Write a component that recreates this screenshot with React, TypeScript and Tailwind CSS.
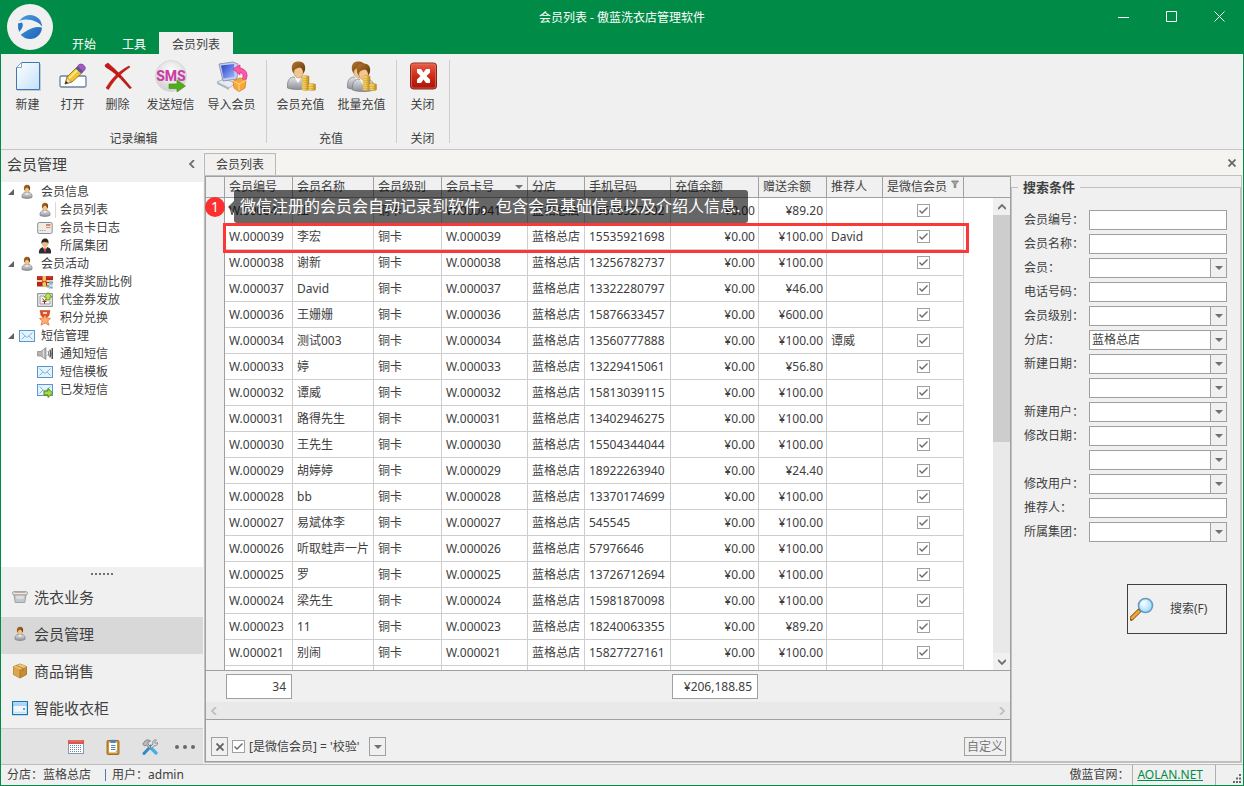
import { useState, type ReactNode } from 'react'
import clsx from 'clsx'

type Member = {
  no: string
  name: string
  phone: string
  gift: string
  referrer?: string
}

const members: Member[] = [
  { no: 'W.000041', name: '江', phone: '13676527302', gift: '¥89.20' },
  { no: 'W.000039', name: '李宏', phone: '15535921698', gift: '¥100.00', referrer: 'David' },
  { no: 'W.000038', name: '谢新', phone: '13256782737', gift: '¥100.00' },
  { no: 'W.000037', name: 'David', phone: '13322280797', gift: '¥46.00' },
  { no: 'W.000036', name: '王姗姗', phone: '15876633457', gift: '¥600.00' },
  { no: 'W.000034', name: '测试003', phone: '13560777888', gift: '¥100.00', referrer: '谭威' },
  { no: 'W.000033', name: '婷', phone: '13229415061', gift: '¥56.80' },
  { no: 'W.000032', name: '谭威', phone: '15813039115', gift: '¥100.00' },
  { no: 'W.000031', name: '路得先生', phone: '13402946275', gift: '¥100.00' },
  { no: 'W.000030', name: '王先生', phone: '15504344044', gift: '¥100.00' },
  { no: 'W.000029', name: '胡婷婷', phone: '18922263940', gift: '¥24.40' },
  { no: 'W.000028', name: 'bb', phone: '13370174699', gift: '¥100.00' },
  { no: 'W.000027', name: '易斌体李', phone: '545545', gift: '¥100.00' },
  { no: 'W.000026', name: '听取蛙声一片', phone: '57976646', gift: '¥100.00' },
  { no: 'W.000025', name: '罗', phone: '13726712694', gift: '¥100.00' },
  { no: 'W.000024', name: '梁先生', phone: '15981870098', gift: '¥100.00' },
  { no: 'W.000023', name: '11', phone: '18240063355', gift: '¥89.20' },
  { no: 'W.000021', name: '别闹', phone: '15827727161', gift: '¥100.00' },
]

const searchFields = [
  { id: 'no', label: '会员编号：', kind: 'text' },
  { id: 'name', label: '会员名称：', kind: 'text' },
  { id: 'member', label: '会员：', kind: 'select' },
  { id: 'phone', label: '电话号码：', kind: 'text' },
  { id: 'level', label: '会员级别：', kind: 'select' },
  { id: 'shop', label: '分店：', kind: 'select', value: '蓝格总店' },
  { id: 'created-from', label: '新建日期：', kind: 'select' },
  { id: 'created-to', label: '', kind: 'select' },
  { id: 'created-by', label: '新建用户：', kind: 'select' },
  { id: 'modified-from', label: '修改日期：', kind: 'select' },
  { id: 'modified-to', label: '', kind: 'select' },
  { id: 'modified-by', label: '修改用户：', kind: 'select' },
  { id: 'referrer', label: '推荐人：', kind: 'text' },
  { id: 'group', label: '所属集团：', kind: 'select' },
]

/* ---------- icons ---------- */

function Gradients() {
  return (
    <svg className="absolute h-0 w-0" aria-hidden="true">
      <defs>
        <linearGradient id="g-paper" x1="0" y1="0" x2="1" y2="1">
          <stop offset="0" stopColor="#ffffff" />
          <stop offset="1" stopColor="#c4e0fa" />
        </linearGradient>
        <linearGradient id="g-logo" x1="0" y1="0" x2="1" y2="1">
          <stop offset="0" stopColor="#4a9fe0" />
          <stop offset="1" stopColor="#1d63b8" />
        </linearGradient>
        <linearGradient id="g-red" x1="0" y1="0" x2="0" y2="1">
          <stop offset="0" stopColor="#e8604a" />
          <stop offset="0.5" stopColor="#cc2c18" />
          <stop offset="1" stopColor="#a81405" />
        </linearGradient>
        <linearGradient id="g-hair" x1="0" y1="0" x2="1" y2="1">
          <stop offset="0" stopColor="#b87830" />
          <stop offset="1" stopColor="#5c3208" />
        </linearGradient>
        <linearGradient id="g-body" x1="0" y1="0" x2="0" y2="1">
          <stop offset="0" stopColor="#e2e4e8" />
          <stop offset="1" stopColor="#8c9096" />
        </linearGradient>
        <linearGradient id="g-gold" x1="0" y1="0" x2="1" y2="0">
          <stop offset="0" stopColor="#f8e08a" />
          <stop offset="0.5" stopColor="#f0c850" />
          <stop offset="1" stopColor="#b07c14" />
        </linearGradient>
        <linearGradient id="g-screen" x1="0" y1="0" x2="1" y2="1">
          <stop offset="0" stopColor="#2440c8" />
          <stop offset="1" stopColor="#a0b8fc" />
        </linearGradient>
        <radialGradient id="g-sms" cx="0.5" cy="0.35" r="0.65">
          <stop offset="0" stopColor="#ffffff" />
          <stop offset="1" stopColor="#cfcfcf" />
        </radialGradient>
        <radialGradient id="g-lens" cx="0.4" cy="0.4" r="0.6">
          <stop offset="0" stopColor="#f4fdff" />
          <stop offset="1" stopColor="#9cdcfa" />
        </radialGradient>
      </defs>
    </svg>
  )
}

function LogoIcon() {
  return (
    <svg viewBox="0 0 46 46" className="h-[46px] w-[46px]">
      <circle cx="23" cy="23" r="23" fill="#f0f0f0" />
      <circle cx="23" cy="23" r="12" fill="url(#g-logo)" />
      <path d="M10 19 C15 13 31 15 36 24 C28 21 22 25 12 32 L10 27 C13 25 13 22 10 19 Z" fill="#f0f0f0" />
      <path d="M11 19.500 L15 18.500 C17 21.500 15 25 12 28 Z" fill="#2a78c8" />
    </svg>
  )
}

function NewIcon() {
  return (
    <svg viewBox="0 0 32 32" className="h-8 w-8">
      <path d="M9.500 2.500 H27.500 V29.500 H4.500 V7.500 Z" fill="url(#g-paper)" stroke="#3f78b4" />
      <path d="M9.500 2.500 V7.500 H4.500 Z" fill="#fff" stroke="#7fa8d0" />
      <path d="M5 30.500 H28.500 V4" fill="none" stroke="#9db4cc" opacity=".6" />
    </svg>
  )
}

function OpenIcon() {
  return (
    <svg viewBox="0 0 32 32" className="h-8 w-8">
      <rect x="3" y="16" width="26" height="11" rx="1.500" fill="#fff" stroke="#6a80a0" strokeWidth="1.300" />
      <path d="M8 24 L10 17 L20 7 L26 12 L15 22 Z" fill="#f4c430" stroke="#8a6410" strokeWidth=".8" />
      <path d="M11.500 19 L22 8.500" stroke="#fff0a0" strokeWidth="1.600" />
      <path d="M8 24 L10 17.500 L14.500 22 Z" fill="#f5dcb4" stroke="#8a6410" strokeWidth=".6" />
      <path d="M8 24 L9 21 L11 23 Z" fill="#222" />
      <path d="M18.500 8.500 L20.500 6.500 L26 11.500 L24 13.500 Z" fill="#4a6090" />
      <path d="M20.500 6.500 C22 3.500 25 3.500 27 5.500 C29 7.500 28.500 10 26 11.500 Z" fill="#a858c8" stroke="#6c2c88" strokeWidth=".7" />
    </svg>
  )
}

function DeleteIcon() {
  return (
    <svg viewBox="0 0 32 32" className="h-8 w-8">
      <path d="M3 5 L6 3 C14 10 21 17 29.500 28 L27.500 28.500 C19 18.500 12 12 3.500 7 Z" fill="#c81810" stroke="#8c0c08" strokeWidth=".5" />
      <path d="M27 6 L28 7 C18 14 12 20 6.500 29.500 L4 28 C10 18 17 11 27 6 Z" fill="#d01c14" stroke="#8c0c08" strokeWidth=".5" />
    </svg>
  )
}

function SmsIcon() {
  return (
    <svg viewBox="0 0 32 32" className="h-8 w-8">
      <circle cx="16" cy="16" r="15.500" fill="url(#g-sms)" stroke="#d8d8d8" />
      <text x="16" y="21" textAnchor="middle" fontFamily="Roboto, sans-serif" fontSize="14" fontWeight="800" fill="#c840a4">SMS</text>
      <path d="M14 24 H22 V20 L30.500 26 L22 32 V28.500 H14 Z" fill="#52ac18" stroke="#3c8c0c" strokeWidth=".6" />
    </svg>
  )
}

function ImportIcon() {
  return (
    <svg viewBox="0 0 32 32" className="h-8 w-8">
      <path d="M1 22 L8 19 L20 23 L13 28 Z" fill="#e8ecf2" stroke="#98a0b0" strokeWidth=".7" />
      <path d="M1 22 V24 L13 30 V28 Z" fill="#b0b8c4" />
      <path d="M3 4 L17 2 L22 4 L21 19 L7 21 Z" fill="#c8d0e8" stroke="#7c88b0" strokeWidth=".8" />
      <path d="M5 5.500 L18 4 L18.500 17 L7.500 18.500 Z" fill="url(#g-screen)" />
      <path d="M17 9 L24 5 V8 C31 9 33 16 29 21 L26 19 C28 16 27 13 24 12.500 V15 Z" fill="#fc58a8" stroke="#d82480" strokeWidth=".7" />
      <path d="M17 21 L24 18 L30 20.500 L29 28 L23 31.500 L18 28 Z" fill="#f8a838" stroke="#c87414" strokeWidth=".7" />
      <path d="M17 21 L23 24 L30 20.500 M23 24 V31" stroke="#fcd890" fill="none" />
    </svg>
  )
}

function Coins() {
  return (
    <g stroke="#b88820" strokeWidth=".4">
      {[29, 27, 25, 23, 21, 19, 17].map((y) => (
        <ellipse key={y} cx="20.500" cy={y} rx="3.800" ry="1.600" fill="url(#g-gold)" />
      ))}
      {[29, 27, 25].map((y) => (
        <ellipse key={y} cx="27" cy={y} rx="3.800" ry="1.600" fill="url(#g-gold)" />
      ))}
    </g>
  )
}

function Bust({ x = 0, y = 0 }: { x?: number; y?: number }) {
  return (
    <g transform={`translate(${x} ${y})`}>
      <path d="M2.500 28 C2 19 5 17.500 9 17 L13 20 L17 17 C22 18 24 20 24 28 C18 30 8 30 2.500 28 Z" fill="url(#g-body)" stroke="#787c82" strokeWidth=".7" />
      <path d="M10 16 H16 V18 L13 23 L10 18 Z" fill="#fff" />
      <path d="M9 6 H18 V12 C18 16 15.500 18 13.500 18 C11 18 9 15 9 12 Z" fill="#f2c690" stroke="#b07c44" strokeWidth=".5" />
      <path d="M7 10 C6 4 9 1.500 13 1.500 C18 1.500 21 4 20 10 L18.500 14 C18 10 17 8 15 7.500 C12 8.500 9 8 8.500 14 Z" fill="url(#g-hair)" />
    </g>
  )
}

function RechargeIcon() {
  return (
    <svg viewBox="0 0 32 32" className="h-8 w-8">
      <Bust />
      <Coins />
    </svg>
  )
}

function BatchRechargeIcon() {
  return (
    <svg viewBox="0 0 32 32" className="h-8 w-8">
      <Bust x={-1} />
      <Bust x={4} y={2} />
      <Coins />
    </svg>
  )
}

function CloseBoxIcon() {
  return (
    <svg viewBox="0 0 32 32" className="h-8 w-8">
      <rect x="3.500" y="3" width="26" height="26" rx="3" fill="url(#g-red)" stroke="#84261c" />
      <rect x="4.500" y="4" width="24" height="24" rx="2" fill="none" stroke="#f0806c" strokeWidth=".8" opacity=".7" />
      <path d="M10 9 H14 L16.500 12.500 L19 9 H23 V12.500 L19.500 16 L23 19.500 V23 H19 L16.500 19.500 L14 23 H10 V19.500 L13.500 16 L10 12.500 Z" fill="#fff" />
    </svg>
  )
}

function PersonIcon() {
  return (
    <svg viewBox="0 0 16 16" className="h-4 w-4">
      <path d="M3 13.500 C2.500 10 4.500 9 6 8.500 H10 C12 9 13.500 10 13 13.500 C10 14.800 6 14.800 3 13.500 Z" fill="url(#g-body)" stroke="#7c8088" strokeWidth=".7" />
      <path d="M6.500 8.500 H9.500 L8 11.500 Z" fill="#fff" />
      <path d="M5.800 3 H10.200 V6 C10.200 8 9 9 8 9 C7 9 5.800 8 5.800 6 Z" fill="#f4c488" stroke="#b07c44" strokeWidth=".4" />
      <path d="M5 5.500 C4.500 2 6 .7 8 .7 C10.500 .7 11.500 2.500 11 5.500 L10.300 6.500 C10 4.500 9 4 8.500 3.500 C7.500 4.200 6 4 5.700 6.500 Z" fill="url(#g-hair)" />
    </svg>
  )
}

function CardIcon() {
  return (
    <svg viewBox="0 0 16 16" className="h-4 w-4">
      <rect x=".7" y="2.500" width="14.500" height="11" rx="1.500" fill="#f0ece4" stroke="#8c9096" />
      <path d="M9 5 H13.500" stroke="#f05a20" strokeWidth="1.500" />
      <path d="M9 7.500 H13.500" stroke="#88a8c8" />
      <path d="M2.500 10.500 H9" stroke="#a8a8b0" strokeDasharray="1.500 .8" />
    </svg>
  )
}

function GroupIcon() {
  return (
    <svg viewBox="0 0 16 16" className="h-4 w-4">
      <path d="M2 15.500 C1.500 11 4 10 6 9 H10 C13 10 14.500 11 14 15.500 Z" fill="#2c2c30" />
      <path d="M6 9 H10 L8 14 Z" fill="#fff" />
      <path d="M7.500 9.500 H8.500 L9 13 L8 14.500 L7 13 Z" fill="#d42820" />
      <circle cx="8" cy="6" r="3" fill="#eeb888" />
      <path d="M4.500 6 C4 2 6 .6 8.500 .6 C11 .6 12 3 11.300 6 L10.500 4.500 C8.500 4 7 3.500 5.500 4.500 Z" fill="#30241c" />
    </svg>
  )
}

function GiftIcon() {
  return (
    <svg viewBox="0 0 16 16" className="h-4 w-4">
      <path d="M0 2 H16 V12.500 H0 Z" fill="#b8241c" />
      <path d="M0 6 H16 V8 H0 Z" fill="#e8d0a0" />
      <path d="M5.500 2 H9 V12.500 H5.500 Z" fill="#f0cc60" />
      <path d="M1 3 H5 M10 3 H15" stroke="#dc5040" strokeWidth="1.200" />
      <path d="M5 6 L7.200 7.500 L9.500 6 V9 L7.200 8 L5 9 Z" fill="#e03c20" />
      <rect x="10" y="9" width="6" height="5" fill="#d8dce0" />
      <circle cx="14" cy="9" r="1.800" fill="#78b8e8" />
      <path d="M12 14.500 C12 12 16 12 16 14.500 Z" fill="#70a8e0" />
      <circle cx="11" cy="12" r="1.500" fill="#80b858" />
    </svg>
  )
}

function VoucherIcon() {
  return (
    <svg viewBox="0 0 16 16" className="h-4 w-4">
      <rect x=".7" y="1.700" width="14.600" height="12.600" fill="#f4f4f4" stroke="#7c8084" />
      <path d="M3 4 V12 M3 4 H7 M3 12 H13 M13 9 V12" stroke="#989ca0" fill="none" />
      <path d="M5.500 6.500 L7.500 9 L9.500 6.500 M7.500 9 V12 M5.500 9.500 H9.500" stroke="#a83028" fill="none" />
      <path d="M11 .5 L15 5 H13 V8 H9 V5 H7 Z" fill="#bce058" stroke="#5c8c14" strokeWidth=".8" />
    </svg>
  )
}

function MedalIcon() {
  return (
    <svg viewBox="0 0 16 16" className="h-4 w-4">
      <path d="M3 .5 H13 L12 5.500 L9.500 8 L8.500 5 H7.500 L6.500 8 L4 5.500 Z" fill="#dc5028" stroke="#b43c14" strokeWidth=".5" />
      <path d="M6 2 H10 V4 H6 Z" fill="#fcd8c0" />
      <path d="M8 5 L9.600 8 L13.500 8.500 L10.700 11 L12 15.200 L8 13 L4 15.200 L5.300 11 L2.500 8.500 L6.400 8 Z" fill="#fcb078" stroke="#e8702c" strokeWidth=".8" />
    </svg>
  )
}

function MailIcon({ sent = false }: { sent?: boolean }) {
  return (
    <svg viewBox="0 0 16 16" className="h-4 w-4">
      <rect x=".5" y="2.500" width="15" height="11" fill="#e4f4fe" stroke="#5c94cc" />
      <path d="M2.500 4.500 L8 9.500 L13.500 4.500 M2.500 11.500 L6 8 M13.500 11.500 L10 8" stroke="#78a8cc" fill="none" strokeWidth=".9" />
      {sent && <path d="M7 9 H11 V6.500 L15.800 11 L11 15.500 V13 H7 Z" fill="#a4dc3c" stroke="#4c7c14" strokeWidth=".9" />}
    </svg>
  )
}

function SpeakerIcon() {
  return (
    <svg viewBox="0 0 16 16" className="h-4 w-4">
      <path d="M.5 5.500 H4 L9 1.500 V13.500 L4 10 H.5 Z" fill="#b4b4b4" stroke="#848484" strokeWidth=".7" />
      <path d="M6.500 4 V11" stroke="#e4e4e4" />
      <path d="M11 5 C12 6.500 12 8.500 11 10" stroke="#888" fill="none" strokeWidth="1.200" />
      <path d="M12.800 3.500 C14 6 14 9 12.800 11.500" stroke="#555" fill="none" strokeWidth="1.200" />
      <path d="M15.200 2 V13" stroke="#222" strokeWidth="1.200" />
    </svg>
  )
}

function BasketIcon() {
  return (
    <svg viewBox="0 0 16 16" className="h-4 w-4">
      <path d="M1.800 5 H14.200 L12.800 13.500 H3.200 Z" fill="#c4c6ca" stroke="#888c90" strokeWidth=".7" />
      <path d="M4 6.500 H12 L11.500 10 H4.500 Z" fill="#dcdee2" />
      <rect x=".6" y="2.600" width="14.800" height="3.200" rx="1.500" fill="#ececec" stroke="#8c8c8c" strokeWidth=".8" />
      <path d="M2.500 3.500 H13.500" stroke="#c49484" strokeWidth=".8" />
    </svg>
  )
}

function BoxIcon() {
  return (
    <svg viewBox="0 0 16 16" className="h-4 w-4">
      <path d="M8 1 L14.500 3.500 V11.500 L8 15 L1.500 11.500 V3.500 Z" fill="#c88c34" stroke="#946418" strokeWidth=".7" />
      <path d="M1.500 3.500 L8 6.500 V15 L1.500 11.500 Z" fill="#dca64c" />
      <path d="M8 1 L14.500 3.500 L8 6.500 L1.500 3.500 Z" fill="#ecc878" />
      <path d="M4 2.500 L11 5.200 V8 M8 6.500 V15" stroke="#a87420" fill="none" strokeWidth=".8" />
    </svg>
  )
}

function CabinetIcon() {
  return (
    <svg viewBox="0 0 16 16" className="h-4 w-4">
      <rect x=".6" y="1.600" width="14.800" height="13" fill="#eef8fe" stroke="#1474b4" strokeWidth="1.200" />
      <path d="M1.200 2.500 H14.800 V4 H1.200 Z" fill="#a4d8f4" />
      <path d="M1 5 H15" stroke="#3c94cc" strokeWidth=".7" />
      <path d="M11 9 H13" stroke="#2c84c0" strokeWidth="1.500" />
      <path d="M2 12.500 H14" stroke="#c4e0f0" strokeWidth="1.500" />
    </svg>
  )
}

function CalendarIcon() {
  return (
    <svg viewBox="0 0 16 16" className="h-4 w-4">
      <rect x=".5" y="1.500" width="15" height="13" fill="#fff" stroke="#8498b8" />
      <path d="M0 1 H16 V5 H0 Z" fill="#d8584c" />
      <path d="M1 2 H15" stroke="#ec9488" strokeWidth=".8" />
      {[6.5, 8.5, 10.5, 12.5].map((y) => (
        <path key={y} d={`M2 ${y} H14`} stroke="#6c84b4" strokeDasharray="1 1" />
      ))}
    </svg>
  )
}

function ClipboardIcon() {
  return (
    <svg viewBox="0 0 16 16" className="h-4 w-4">
      <rect x="2" y="1.500" width="12" height="14" rx="1" fill="#d49428" stroke="#8c5c10" strokeWidth=".8" />
      <rect x="4" y="3.500" width="8" height="10" fill="#f8fcff" />
      <path d="M5.500 .8 H10.500 V4 H5.500 Z" fill="#4884c0" />
      <path d="M6 6.500 H10.500 M6 8.500 H10.500 M6 10.500 H10.500" stroke="#5488b8" />
      <path d="M9.500 13.500 L12 11 V13.500 Z" fill="#a8c4dc" />
    </svg>
  )
}

function ToolsIcon() {
  return (
    <svg viewBox="0 0 16 16" className="h-4 w-4">
      <path d="M2 14.500 L9 7" stroke="#2c8ccc" strokeWidth="3" strokeLinecap="round" />
      <path d="M9 9 L14 14" stroke="#44b0e8" strokeWidth="3.200" strokeLinecap="round" />
      <path d="M8.500 7.500 L11 5 C10 2 12 .5 14.500 1 L12.500 3 L13.500 4.500 L15.500 3.500 C16 6 13.500 7.500 12 6.800 L9.500 9.500 Z" fill="#d8dce0" stroke="#6c7078" strokeWidth=".7" />
      <path d="M.7 5 L3 2 C5 .3 7 .8 8.500 2 L6 3 L6 5 L9 8 L7.500 9.500 L4.500 6 L2.500 7 Z" fill="#b8bcc0" stroke="#64686c" strokeWidth=".7" />
    </svg>
  )
}

function SearchIcon() {
  return (
    <svg viewBox="0 0 24 24" className="h-6 w-6">
      <path d="M1.500 21.500 L9.500 13.500" stroke="#785018" strokeWidth="4.500" strokeLinecap="round" />
      <path d="M2 21 L8.500 14.500" stroke="#f4a434" strokeWidth="3" strokeLinecap="round" />
      <circle cx="15.500" cy="8.500" r="7" fill="url(#g-lens)" stroke="#6898c4" strokeWidth="1.600" />
      <path d="M11.500 8 C11.500 5.500 14 4 16.500 4.500" stroke="#fff" strokeWidth="1.500" fill="none" />
    </svg>
  )
}

function DownArrow({ className }: { className?: string }) {
  return (
    <svg viewBox="0 0 8 4" className={clsx('h-1 w-2', className)}>
      <path d="M0 0 H8 L4 4 Z" fill="#707070" />
    </svg>
  )
}

function Chevron({ d, className }: { d: string; className?: string }) {
  return (
    <svg viewBox="0 0 8 8" className={clsx('h-2 w-2', className)} fill="none" stroke="currentColor" strokeWidth="1.800">
      <path d={d} />
    </svg>
  )
}

/* ---------- shared controls ---------- */

function CheckBox({ label, defaultChecked = true }: { label: string; defaultChecked?: boolean }) {
  return (
    <span className="inline-grid h-[13px] w-[13px] align-middle">
      <input
        type="checkbox"
        aria-label={label}
        defaultChecked={defaultChecked}
        className="peer col-start-1 row-start-1 h-[13px] w-[13px] appearance-none border border-[#a0a0a0] bg-white"
      />
      <svg viewBox="0 0 13 13" className="pointer-events-none invisible col-start-1 row-start-1 h-[13px] w-[13px] peer-checked:visible">
        <path d="M2.500 6.500 L5 9 L10.500 3.500" fill="none" stroke="#686868" strokeWidth="1.400" />
      </svg>
    </span>
  )
}

function RibbonGroup({ title, children }: { title: string; children: ReactNode }) {
  return (
    <section className="my-1.5 flex flex-col justify-between border-r border-[#cecece] pr-1 pl-[3px]">
      <div className="flex">{children}</div>
      <h2 className="-mb-1 text-center leading-4">{title}</h2>
    </section>
  )
}

function RibbonButton({ icon, label, wide = false }: { icon: ReactNode; label: string; wide?: boolean }) {
  return (
    <button type="button" className={clsx('flex flex-col items-center gap-[5px] hover:bg-[#dcdcdc]', wide ? 'w-[61px]' : 'w-[45px]')}>
      {icon}
      <span className="leading-4 whitespace-nowrap">{label}</span>
    </button>
  )
}

/* ---------- page parts ---------- */

function TitleBar() {
  return (
    <header className="relative flex h-[54px] shrink-0 justify-between bg-[#008c46] text-white">
      <div className="flex">
        <div className="pt-1 pl-1.5">
          <LogoIcon />
        </div>
        <nav className="ml-1.5 flex items-end">
          <button type="button" className="h-[22px] w-[50px] pt-1">开始</button>
          <button type="button" className="h-[22px] w-[50px] pt-1">工具</button>
          <button type="button" className="h-[22px] w-[74px] bg-[#f0f0f0] pt-1 text-[#404040]">会员列表</button>
        </nav>
      </div>
      <h1 className="absolute top-2 left-1/2 -translate-x-1/2 leading-5">会员列表 - 傲蓝洗衣店管理软件</h1>
      <div className="flex h-8">
        <button type="button" aria-label="最小化" className="grid w-12 place-items-center">
          <svg viewBox="0 0 11 11" className="h-[11px] w-[11px]"><path d="M0 6.500 H11" stroke="#fff" /></svg>
        </button>
        <button type="button" aria-label="最大化" className="grid w-12 place-items-center">
          <svg viewBox="0 0 11 11" className="h-[11px] w-[11px]"><path d="M.5 .5 H10.500 V10.500 H.5 Z" stroke="#fff" fill="none" /></svg>
        </button>
        <button type="button" aria-label="关闭窗口" className="grid w-12 place-items-center">
          <svg viewBox="0 0 11 11" className="h-[11px] w-[11px]"><path d="M.5 .5 L10.500 10.500 M10.500 .5 L.5 10.500" stroke="#fff" /></svg>
        </button>
      </div>
    </header>
  )
}

function Ribbon() {
  return (
    <div className="flex h-24 shrink-0 border-b border-[#c6c6c6] bg-[#f0f0f0] pl-px">
      <RibbonGroup title="记录编辑">
        <RibbonButton icon={<NewIcon />} label="新建" />
        <RibbonButton icon={<OpenIcon />} label="打开" />
        <RibbonButton icon={<DeleteIcon />} label="删除" />
        <RibbonButton icon={<SmsIcon />} label="发送短信" wide />
        <RibbonButton icon={<ImportIcon />} label="导入会员" wide />
      </RibbonGroup>
      <RibbonGroup title="充值">
        <RibbonButton icon={<RechargeIcon />} label="会员充值" wide />
        <RibbonButton icon={<BatchRechargeIcon />} label="批量充值" wide />
      </RibbonGroup>
      <RibbonGroup title="关闭">
        <RibbonButton icon={<CloseBoxIcon />} label="关闭" />
      </RibbonGroup>
    </div>
  )
}

const tree = [
  {
    label: '会员信息',
    icon: <PersonIcon />,
    items: [
      { label: '会员列表', icon: <PersonIcon />, active: true },
      { label: '会员卡日志', icon: <CardIcon /> },
      { label: '所属集团', icon: <GroupIcon /> },
    ],
  },
  {
    label: '会员活动',
    icon: <PersonIcon />,
    items: [
      { label: '推荐奖励比例', icon: <GiftIcon /> },
      { label: '代金券发放', icon: <VoucherIcon /> },
      { label: '积分兑换', icon: <MedalIcon /> },
    ],
  },
  {
    label: '短信管理',
    icon: <MailIcon />,
    items: [
      { label: '通知短信', icon: <SpeakerIcon /> },
      { label: '短信模板', icon: <MailIcon /> },
      { label: '已发短信', icon: <MailIcon sent /> },
    ],
  },
]

const modules = [
  { label: '洗衣业务', icon: <BasketIcon /> },
  { label: '会员管理', icon: <PersonIcon /> },
  { label: '商品销售', icon: <BoxIcon /> },
  { label: '智能收衣柜', icon: <CabinetIcon /> },
]

function Sidebar() {
  const [current, setCurrent] = useState('会员管理')

  return (
    <aside className="flex w-[203px] shrink-0 flex-col border-r border-[#f6f4f0] bg-[#f0f0f0]">
      <div className="flex h-8 shrink-0 items-center justify-between pr-[7px] pb-1 pl-1.5">
        <h2 className="text-[15px]">会员管理</h2>
        <button type="button" aria-label="收起" className="text-[#707070]">
          <Chevron d="M6 0 L2 4 L6 8" />
        </button>
      </div>
      <ul className="min-h-0 flex-1 overflow-hidden bg-white pt-px">
        {tree.map((node) => (
          <li key={node.label}>
            <div className="flex h-[18px] items-center">
              <svg viewBox="0 0 6 6" className="ml-[7px] h-1.5 w-1.5"><path d="M6 0 V6 H0 Z" fill="#606060" /></svg>
              <span className="ml-[5px]">{node.icon}</span>
              <span className="ml-1.5">{node.label}</span>
            </div>
            <ul>
              {node.items.map((item) => (
                <li key={item.label} className="flex h-[18px] items-center pl-9">
                  {item.icon}
                  <a href="#" className={clsx('ml-0.5 border-l pl-1', 'active' in item ? 'border-[#d8d8d8]' : 'border-transparent')}>{item.label}</a>
                </li>
              ))}
            </ul>
          </li>
        ))}
      </ul>
      <div className="flex h-[13px] shrink-0 items-center justify-center gap-0.5 border-t border-[#f0f0f0]">
        {[0, 1, 2, 3, 4, 5].map((i) => (
          <span key={i} className="h-0.5 w-0.5 bg-[#707070]" />
        ))}
      </div>
      <nav>
        {modules.map((m) => (
          <button
            key={m.label}
            type="button"
            onClick={() => setCurrent(m.label)}
            className={clsx('flex h-[37px] w-full items-center gap-1.5 pb-[3px] pl-[11px] text-[15px]', m.label === current && 'bg-[#d8d8d8]')}
          >
            {m.icon}
            {m.label}
          </button>
        ))}
      </nav>
      <div className="flex h-9 shrink-0 items-center justify-end gap-[21px] border-t border-[#cecece] bg-[#e2e2e2] pr-2">
        <button type="button" aria-label="日历"><CalendarIcon /></button>
        <button type="button" aria-label="单据"><ClipboardIcon /></button>
        <button type="button" aria-label="工具设置"><ToolsIcon /></button>
        <button type="button" aria-label="更多" className="-ml-1 flex gap-1">
          {[0, 1, 2].map((i) => (
            <span key={i} className="h-1 w-1 rounded-full bg-[#686868]" />
          ))}
        </button>
      </div>
    </aside>
  )
}

const columns = [
  { title: '会员编号', col: 'w-[68px]' },
  { title: '会员名称', col: 'w-[81px]' },
  { title: '会员级别', col: 'w-[68px]' },
  { title: '会员卡号', col: 'w-[86px]', sort: true },
  { title: '分店', col: 'w-[57px]' },
  { title: '手机号码', col: 'w-[86px]' },
  { title: '充值余额', col: 'w-[88px]' },
  { title: '赠送余额', col: 'w-[68px]' },
  { title: '推荐人', col: 'w-[56px]' },
  { title: '是微信会员', col: 'w-[81px]', filter: true },
]

const cell = 'overflow-hidden border-r border-b border-[#cecece] px-1 whitespace-nowrap'
const numCell = 'overflow-hidden border-r border-b border-[#cecece] px-[3px] text-right whitespace-nowrap'

function MemberTable() {
  return (
    <div className="relative min-h-0 flex-1 overflow-hidden border-b border-[#a0a0a0] bg-white">
      <table className="w-full table-fixed border-separate border-spacing-0">
        <colgroup>
          <col className="w-[19px]" />
          {columns.map((c) => (
            <col key={c.title} className={c.col} />
          ))}
          <col />
        </colgroup>
        <thead>
          <tr className="h-[21px] bg-[#f0f0f0]">
            <th className="border-r border-b border-[#a0a0a0]" />
            {columns.map((c) => (
              <th key={c.title} className="border-r border-b border-[#a0a0a0] px-1 text-left font-normal whitespace-nowrap">
                <div className="flex items-center justify-between leading-5">
                  {c.title}
                  {c.sort && <DownArrow className="shrink-0" />}
                  {c.filter && (
                    <svg viewBox="0 0 8 8" className="mb-1.5 h-2 w-2">
                      <path d="M.5 1 H7.500 L4.800 4 V7.500 H3.200 V4 Z" fill="#aaa" stroke="#666" strokeWidth=".7" />
                    </svg>
                  )}
                </div>
              </th>
            ))}
            <th className="border-b border-[#a0a0a0]" />
          </tr>
        </thead>
        <tbody>
          {members.map((m) => (
            <tr key={m.no} className="h-[26px]">
              <td className="border-r border-[#a0a0a0] bg-[#f0f0f0]" />
              <td className={cell}>{m.no}</td>
              <td className={cell}>{m.name}</td>
              <td className={cell}>铜卡</td>
              <td className={cell}>{m.no}</td>
              <td className={cell}>蓝格总店</td>
              <td className={cell}>{m.phone}</td>
              <td className={numCell}>¥0.00</td>
              <td className={numCell}>{m.gift}</td>
              <td className={cell}>{m.referrer}</td>
              <td className="border-r border-b border-[#cecece] text-center leading-3">
                <CheckBox label={`${m.no} 是微信会员`} />
              </td>
              <td />
            </tr>
          ))}
          <tr className="h-[26px]">
            <td className="border-r border-[#a0a0a0] bg-[#f0f0f0]" />
            {columns.map((c) => (
              <td key={c.title} className={cell} />
            ))}
            <td />
          </tr>
        </tbody>
      </table>

      {/* vertical scrollbar */}
      <div className="absolute top-[21px] right-0 bottom-0 flex w-[17px] flex-col bg-[#e9e9e9] text-[#707070]">
        <button type="button" aria-label="向上滚动" className="grid h-[17px] shrink-0 place-items-center bg-[#f0f0f0]">
          <Chevron d="M0 6 L4 2 L8 6" />
        </button>
        <div className="h-[48%] bg-[#cdcdcd]" />
        <button type="button" aria-label="向下滚动" className="mt-auto grid h-[17px] shrink-0 place-items-center bg-[#f0f0f0]">
          <Chevron d="M0 2 L4 6 L8 2" />
        </button>
      </div>
    </div>
  )
}

/* marks the newly registered member and explains where it comes from */
function Callout() {
  return (
    <div className="pointer-events-none">
      <div className="absolute top-[46px] left-[17px] h-[30px] w-[746px] border-3 border-[#fb3838]" />
      <div className="absolute top-[13px] -left-px flex items-center">
        <span className="grid h-5 w-5 place-items-center rounded-full bg-[#fb3030] text-sm text-white">1</span>
        <span className="ml-[3px] h-0 w-0 border-y-6 border-r-6 border-y-transparent border-r-black/60" />
        <p className="h-[33px] rounded-[3px] bg-black/60 pr-2 pl-1.5 text-base leading-8 whitespace-nowrap text-white">
          微信注册的会员会自动记录到软件，包含会员基础信息以及介绍人信息.
        </p>
      </div>
    </div>
  )
}

function MemberGrid() {
  return (
    <section className="relative flex min-w-0 flex-1 flex-col border border-[#a0a0a0] bg-[#f0f0f0]">
      <MemberTable />
      <div className="flex h-[31px] shrink-0 items-center">
        <output className="ml-5 h-[25px] w-[66px] border border-[#a0a0a0] bg-white px-[5px] text-right leading-[23px]">34</output>
        <output className="ml-[380px] h-[25px] w-[86px] border border-[#a0a0a0] bg-white px-[5px] text-right leading-[23px]">¥206,188.85</output>
      </div>
      <div className="flex h-[18px] shrink-0 items-center justify-between border-b border-[#a0a0a0] bg-[#e9e9e9] px-1 text-[#c0c0c0]">
        <Chevron d="M6 0 L2 4 L6 8" />
        <Chevron d="M2 0 L6 4 L2 8" />
      </div>
      <div className="flex h-[41px] shrink-0 items-center pt-4 pr-1 pb-1 pl-[5px]">
        <button type="button" aria-label="清除筛选" className="grid h-[19px] w-[17px] place-items-center border border-[#a0a0a0] text-[#606060]">
          <Chevron d="M.5 .5 L7.500 7.500 M7.500 .5 L.5 7.500" />
        </button>
        <span className="ml-1 flex items-center gap-1">
          <CheckBox label="启用筛选" />
          <span className="min-w-[117px]">[是微信会员] = '校验'</span>
        </span>
        <button type="button" aria-label="最近筛选" className="ml-[3px] grid h-[19px] w-[17px] place-items-center border border-[#a0a0a0]">
          <DownArrow />
        </button>
        <button type="button" className="ml-auto h-[19px] border border-[#a0a0a0] px-0.5 leading-[17px] text-[#787878]">自定义</button>
      </div>
      <Callout />
    </section>
  )
}

function SearchPanel() {
  return (
    <form className="w-[230px] shrink-0" onSubmit={(e) => e.preventDefault()}>
      <fieldset className="h-full border border-[#c0c0c0]">
        <legend className="ml-1.5 h-[22px] px-[5px] text-[13px] leading-[22px] font-bold">搜索条件</legend>
        <div className="flex flex-col gap-1 pt-3 pr-[13px] pl-3">
          {searchFields.map((f) => (
            <div key={f.id} className="flex h-5 items-center">
              <label htmlFor={f.id} className="w-[65px] shrink-0 leading-5 whitespace-nowrap">{f.label}</label>
              {f.kind === 'text' ? (
                <input id={f.id} type="text" className="h-5 w-0 flex-1 border border-[#a0a0a0] bg-white px-0.5" />
              ) : (
                <div className="flex h-5 flex-1 border border-[#a0a0a0] bg-white">
                  <select id={f.id} aria-label={f.label || '截止日期'} className="w-0 flex-1 appearance-none px-0.5">
                    <option>{f.value}</option>
                  </select>
                  <span className="grid w-4 place-items-center border-l border-[#a0a0a0] bg-[#f0f0f0]">
                    <DownArrow />
                  </span>
                </div>
              )}
            </div>
          ))}
          <button type="submit" className="mt-[38px] flex h-[50px] w-[100px] items-center gap-4 self-end border border-[#404040] pl-0.5 text-left">
            <SearchIcon />
            搜索(F)
          </button>
        </div>
      </fieldset>
    </form>
  )
}

function StatusBar() {
  return (
    <footer className="flex h-[21px] shrink-0 items-center border-t border-[#bcbcbc] bg-[#f0f0f0]">
      <span className="ml-1.5">分店：蓝格总店</span>
      <span className="mr-1.5 ml-3.5 h-3 w-px bg-[#4c7cb4]" />
      <span>用户：admin</span>
      <span className="ml-auto">傲蓝官网：</span>
      <span className="ml-[3px] flex h-full items-center border-x border-[#b0b0b0] pr-3 pl-1">
        <a href="#" className="text-[#008c46] underline">AOLAN.NET</a>
      </span>
      <svg viewBox="0 0 10 10" className="mt-2 mr-px ml-4 h-2.5 w-2.5" fill="#686868">
        <path d="M7 0h2v2h-2z M4 3.500h2v2h-2z M7 3.500h2v2h-2z M1 7h2v2h-2z M4 7h2v2h-2z M7 7h2v2h-2z" />
      </svg>
    </footer>
  )
}

function App() {
  return (
    <div className="flex h-screen flex-col border-x border-b border-[#008c46] bg-[#f0f0f0] font-['Noto_Sans','Noto_Sans_CJK_SC',sans-serif] text-xs text-[#404040]">
      <Gradients />
      <TitleBar />
      <Ribbon />
      <div className="flex min-h-0 flex-1">
        <Sidebar />
        <main className="flex min-w-0 flex-1 flex-col bg-[#f6f4f0] pr-px pb-px">
          <div className="flex h-[25px] shrink-0 items-end justify-between pr-1.5">
            <div className="h-[22px] border border-b-0 border-[#b8b8b8] bg-[#f2f1f0] px-[11px] leading-[22px]">会员列表</div>
            <button type="button" aria-label="关闭页签" className="mb-2 text-[#686868]">
              <Chevron d="M.5 .5 L7.500 7.500 M7.500 .5 L.5 7.500" />
            </button>
          </div>
          <div className="flex min-h-0 flex-1 border border-[#c0c0c0] bg-[#f0f0f0]">
            <MemberGrid />
            <SearchPanel />
          </div>
        </main>
      </div>
      <StatusBar />
    </div>
  )
}

export default App
